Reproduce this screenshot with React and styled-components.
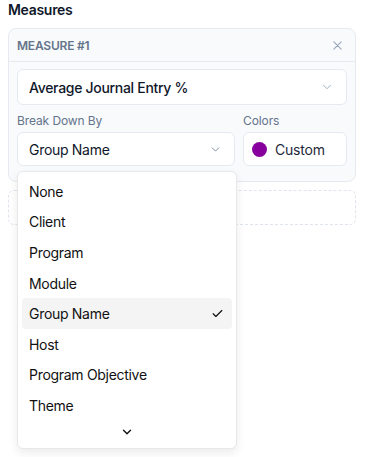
import React from "react";
import styled, { createGlobalStyle } from "styled-components";

const Global = createGlobalStyle`
  body {
    margin: 0;
    background: #ffffff;
    font-family: Inter, "Noto Sans", sans-serif;
    color: #0f172a;
  }
`;

const Page = styled.div`
  min-height: 457px;
  padding: 0 12px 0 8px;
`;

const Title = styled.div`
  font-size: 14px;
  font-weight: 600;
  line-height: 20px;
  letter-spacing: -0.3px;
  color: #0f172a;
  margin-bottom: 8px;
`;

const Card = styled.div`
  border: 1px solid #e6eaf0;
  border-radius: 8px;
  background: #f8fafc;
`;

const CardHeader = styled.div`
  display: flex;
  align-items: center;
  justify-content: space-between;
  height: 32px;
  padding: 0 12px 0 8px;
  border-bottom: 1px solid #e6eaf0;
  font-size: 12px;
  font-weight: 600;
  letter-spacing: -0.2px;
  color: #64748b;
`;

const CardBody = styled.div`
  padding: 7px 8px 15px 8px;
`;

const SelectBox = styled.div`
  display: flex;
  align-items: center;
  justify-content: space-between;
  height: ${(p) => p.h}px;
  box-sizing: border-box;
  padding: 0 12px 0 11px;
  background: #ffffff;
  border: 1px solid #e6eaf0;
  border-radius: 6px;
  font-size: 14px;
  letter-spacing: -0.3px;
  font-weight: ${(p) => (p.strong ? 500 : 400)};
  color: #0f172a;
`;

const Row = styled.div`
  display: grid;
  grid-template-columns: 1fr 104px;
  gap: 8px;
  margin-top: 8px;
`;

const Field = styled.div`
  position: relative;
  display: flex;
  flex-direction: column;
  gap: 3px;
`;

const Label = styled.div`
  font-size: 12px;
  line-height: 16px;
  letter-spacing: -0.1px;
  color: #64748b;
`;

const ColorBox = styled.div`
  display: flex;
  align-items: center;
  gap: 8px;
  height: 34px;
  box-sizing: border-box;
  padding: 0 8px;
  background: #ffffff;
  border: 1px solid #e6eaf0;
  border-radius: 6px;
  font-size: 14px;
  letter-spacing: -0.2px;
  color: #1e293b;
`;

const Swatch = styled.span`
  width: 15px;
  height: 15px;
  border-radius: 50%;
  background: ${(p) => p.color};
`;

const AddBox = styled.div`
  margin-top: 8px;
  height: 35px;
  box-sizing: border-box;
  border: 1px dashed #dfe4ec;
  border-radius: 6px;
`;

const Menu = styled.div`
  position: absolute;
  top: calc(100% + 5px);
  left: 0;
  width: 220px;
  box-sizing: border-box;
  padding: 4px;
  background: #ffffff;
  border: 1px solid #e8e8ea;
  border-radius: 6px;
  box-shadow: 0 4px 10px rgba(0, 0, 0, 0.08);
  z-index: 10;
`;

const Item = styled.div`
  display: flex;
  align-items: center;
  justify-content: space-between;
  height: 30.6px;
  padding: 0 8px 0 7px;
  border-radius: 4px;
  font-size: 14px;
  letter-spacing: -0.3px;
  color: #111111;
  background: ${(p) => (p.active ? "#f4f4f5" : "transparent")};
`;

const ScrollDown = styled.div`
  display: flex;
  align-items: center;
  justify-content: center;
  height: 23px;
`;

const Chevron = ({ size = 12, color = "#64748b", width = 1.5 }) => (
  <svg width={size} height={size} viewBox="0 0 24 24" fill="none" stroke={color} strokeWidth={width} strokeLinecap="round" strokeLinejoin="round">
    <path d="m6 9 6 6 6-6" />
  </svg>
);

const options = ["None", "Client", "Program", "Module", "Group Name", "Host", "Program Objective", "Theme"];

export default function App() {
  return (
    <Page>
      <Global />
      <Title>Measures</Title>
      <Card>
        <CardHeader>
          <span>MEASURE #1</span>
          <svg width="11" height="11" viewBox="0 0 24 24" fill="none" stroke="#94a3b8" strokeWidth="2.2" strokeLinecap="round">
            <path d="M4 4l16 16M20 4L4 20" />
          </svg>
        </CardHeader>
        <CardBody>
          <SelectBox h={36} strong>
            <span>Average Journal Entry %</span>
            <Chevron size={14} color="#94a3b8" />
          </SelectBox>
          <Row>
            <Field>
              <Label>Break Down By</Label>
              <SelectBox h={34}>
                <span>Group Name</span>
                <Chevron size={13} color="#64748b" />
              </SelectBox>
              <Menu>
                {options.map((o) => (
                  <Item key={o} active={o === "Group Name"}>
                    <span>{o}</span>
                    {o === "Group Name" && (
                      <svg width="13" height="13" viewBox="0 0 24 24" fill="none" stroke="#111" strokeWidth="2.2" strokeLinecap="round" strokeLinejoin="round">
                        <path d="M4 12.5l5 5L20 6.5" />
                      </svg>
                    )}
                  </Item>
                ))}
                <ScrollDown>
                  <Chevron size={14} color="#111" width={2.4} />
                </ScrollDown>
              </Menu>
            </Field>
            <Field>
              <Label>Colors</Label>
              <ColorBox>
                <Swatch color="#87009d" />
                <span>Custom</span>
              </ColorBox>
            </Field>
          </Row>
        </CardBody>
      </Card>
      <AddBox />
    </Page>
  );
}
